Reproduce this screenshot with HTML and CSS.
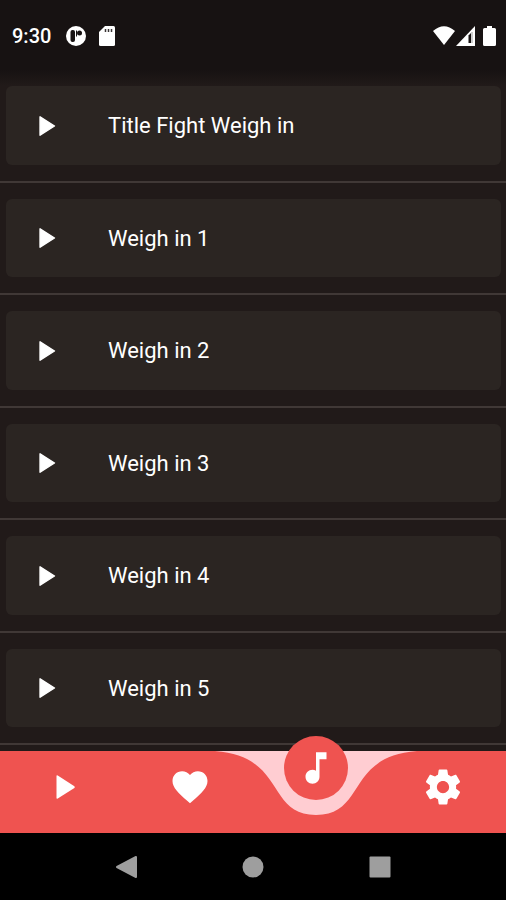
FILE: index.html
```html
<!DOCTYPE html>
<html lang="en">
<head>
<meta charset="utf-8">
<meta name="viewport" content="width=device-width, initial-scale=1">
<title>Weigh in</title>
<link rel="stylesheet" href="styles.css">
</head>
<body>
<svg class="symbols" aria-hidden="true">
  <symbol id="play" viewBox="0 0 24 24"><path d="M8.5 5.5v13l10.2-6.5z" fill="currentColor" stroke="currentColor" stroke-linejoin="round"/></symbol>
</svg>
<div class="screen">
  <header class="status">
    <div class="status-group">
      <time>9:30</time>
      <svg class="status-icon" viewBox="0 0 20 20" aria-hidden="true">
        <circle cx="10" cy="10" r="10" fill="#fff"/>
        <rect x="4.500" y="4" width="4.500" height="12" rx="2" fill="#171212"/>
        <path d="M10.500 4.500v6" stroke="#171212" stroke-width="1"/>
        <circle cx="13.500" cy="7" r="2.500" fill="#171212"/>
      </svg>
      <svg class="status-icon card-icon" viewBox="0 0 16 20" aria-hidden="true">
        <path d="M6 0h8.500Q16 0 16 1.500v17q0 1.500-1.500 1.500h-13Q0 20 0 18.500V6z" fill="#fff"/>
        <path d="M6.500 3v3M9.500 3v3M12.500 3v3" stroke="#3a3535" stroke-width="1.500"/>
      </svg>
    </div>
    <div class="status-group status-right">
      <svg width="22" height="20" viewBox="0 0 22 20" aria-hidden="true"><path d="M0 5Q11-4.500 22 5L11 19z" fill="#fff"/></svg>
      <svg width="19" height="20" viewBox="0 0 19 20" aria-hidden="true"><path d="M19 0v20H0z" fill="#fff"/><path d="M12.500 9.500L15 7v10h-2.500z" fill="#171212"/><path d="M16 6v11" stroke="#999" stroke-width="1"/></svg>
      <svg class="battery" width="13" height="20" viewBox="0 0 13 20" aria-hidden="true"><path d="M4 0h5v2h2.500Q13 2 13 3.500v15q0 1.500-1.500 1.500h-10Q0 20 0 18.500v-15Q0 2 1.500 2H4z" fill="#fff"/></svg>
    </div>
  </header>
  <main>
    <ul class="tracks">
      <li><button class="track" type="button"><svg aria-hidden="true"><use href="#play"/></svg>Title Fight Weigh in</button></li>
      <li><button class="track" type="button"><svg aria-hidden="true"><use href="#play"/></svg>Weigh in 1</button></li>
      <li><button class="track" type="button"><svg aria-hidden="true"><use href="#play"/></svg>Weigh in 2</button></li>
      <li><button class="track" type="button"><svg aria-hidden="true"><use href="#play"/></svg>Weigh in 3</button></li>
      <li><button class="track" type="button"><svg aria-hidden="true"><use href="#play"/></svg>Weigh in 4</button></li>
      <li><button class="track" type="button"><svg aria-hidden="true"><use href="#play"/></svg>Weigh in 5</button></li>
    </ul>
  </main>
  <nav class="tabs" aria-label="Sections">
    <button class="tab" type="button" aria-label="Play"><svg viewBox="0 0 24 24" aria-hidden="true"><path fill="currentColor" d="M8.300 5.700Q8.300 5 9 5.400L18.500 11.500Q19 12 18.500 12.500L9 18.600Q8.300 19 8.300 18.300z"/></svg></button>
    <button class="tab" type="button" aria-label="Favorites"><svg viewBox="0 0 24 24" aria-hidden="true"><path fill="currentColor" d="M12 21.350l-1.450-1.320C5.400 15.360 2 12.280 2 8.500 2 5.420 4.420 3 7.500 3c1.740 0 3.410.81 4.500 2.090C13.090 3.810 14.760 3 16.500 3 19.580 3 22 5.420 22 8.500c0 3.780-3.400 6.860-8.550 11.540z"/></svg></button>
    <button class="tab current" type="button" aria-label="Music" aria-current="page">
      <svg class="notch" viewBox="0 0 202 64" aria-hidden="true"><path fill="#ffcdd2" d="M0 0C71 5 51 64 101 64S131 5 202 0z"/></svg>
      <span class="bubble"><svg viewBox="0 0 24 24" aria-hidden="true"><path fill="currentColor" d="M12 3v10.550c-.59-.34-1.270-.55-2-.55-2.210 0-4 1.790-4 4s1.790 4 4 4 4-1.790 4-4V7h4V3z"/></svg></span>
    </button>
    <button class="tab" type="button" aria-label="Settings"><svg viewBox="0 0 24 24" aria-hidden="true"><path fill="currentColor" d="M19.430 12.980c.04-.32.07-.64.07-.98s-.03-.66-.07-.98l2.110-1.650c.19-.15.24-.42.12-.64l-2-3.460c-.12-.22-.39-.3-.61-.22l-2.490 1c-.52-.4-1.080-.73-1.690-.98l-.38-2.650C14.460 2.180 14.250 2 14 2h-4c-.25 0-.46.18-.49.42l-.38 2.650c-.61.25-1.170.59-1.690.98l-2.490-1c-.23-.09-.49 0-.61.22l-2 3.460c-.13.22-.07.49.12.64l2.110 1.650c-.04.32-.07.65-.07.98s.03.66.07.98l-2.110 1.650c-.19.15-.24.42-.12.64l2 3.460c.12.22.39.3.61.22l2.490-1c.52.4 1.080.73 1.690.98l.38 2.650c.03.24.24.42.49.42h4c.25 0 .46-.18.49-.42l.38-2.650c.61-.25 1.170-.59 1.690-.98l2.490 1c.23.09.49 0 .61-.22l2-3.460c.12-.22.07-.49-.12-.64zM12 15.500c-1.930 0-3.500-1.570-3.500-3.500s1.570-3.500 3.500-3.500 3.500 1.570 3.500 3.500-1.570 3.500-3.500 3.500z"/></svg></button>
  </nav>
  <nav class="system" aria-label="System">
    <button type="button" aria-label="Back"><svg viewBox="0 0 24 24" aria-hidden="true"><path d="M21 2v20L2 12z" fill="currentColor" stroke="currentColor" stroke-width="2" stroke-linejoin="round"/></svg></button>
    <button type="button" aria-label="Home"><svg viewBox="0 0 24 24" aria-hidden="true"><circle cx="12" cy="12" r="10.500" fill="currentColor"/></svg></button>
    <button type="button" aria-label="Recent apps"><svg viewBox="0 0 24 24" aria-hidden="true"><rect x="1.500" y="1.500" width="21" height="21" rx="1" fill="currentColor"/></svg></button>
  </nav>
</div>
</body>
</html>
```
FILE: styles.css
```css
* { box-sizing: border-box; }

body {
  margin: 0;
  background: #211a19;
  color: #fff;
  font-family: Roboto, "Liberation Sans", sans-serif;
}

button {
  margin: 0;
  padding: 0;
  border: 0;
  background: none;
  color: inherit;
  font: inherit;
  cursor: pointer;
}

svg { display: block; flex: none; }

.symbols { position: absolute; width: 0; height: 0; }

.screen {
  display: flex;
  flex-direction: column;
  min-height: 100vh;
}

.status {
  display: flex;
  align-items: center;
  justify-content: space-between;
  height: 70px;
  padding: 1px 10px 0 12px;
  background: #171212;
}

.status-group {
  display: flex;
  align-items: center;
  gap: 15px;
  font-size: 20px;
  font-weight: 500;
}

.status-right { gap: 1px; }
.status-icon { height: 20px; width: 20px; }
.card-icon { width: 16px; margin-left: -2px; }
.battery { margin-left: 7px; }

main {
  display: flex;
  flex: 1;
  padding-bottom: 6px;
  background: linear-gradient(#171212 0, #211a19 16px);
}

.tracks {
  display: grid;
  flex: 1;
  grid-auto-rows: 1fr;
  margin: 0;
  padding: 0;
  list-style: none;
}

.tracks li {
  display: flex;
  padding: 16px 5px 16px 6px;
  border-bottom: 2px solid #403836;
}

.track {
  display: flex;
  flex: 1;
  align-items: center;
  gap: 46px;
  padding: 1px 22px 0;
  border-radius: 6px;
  background: #2b2522;
  font-size: 22px;
  text-align: left;
}

.track svg { width: 34px; height: 34px; }

.tabs {
  display: grid;
  grid-template-columns: repeat(4, 1fr);
  height: 82px;
  background: #ef5350;
}

.tab {
  display: flex;
  align-items: flex-start;
  justify-content: center;
  padding-top: 15px;
}

.tab svg { width: 42px; height: 42px; }

.current { position: relative; }

.tab .notch {
  position: absolute;
  top: 0;
  left: 50%;
  width: 202px;
  height: 64px;
  transform: translateX(-50%);
}

.bubble {
  position: absolute;
  top: -15px;
  display: grid;
  place-items: center;
  width: 64px;
  height: 64px;
  border-radius: 50%;
  background: #ef5350;
}

.system {
  display: grid;
  grid-template-columns: repeat(3, 1fr);
  height: 67px;
  padding: 0 12.5%;
  background: #000;
  color: #9e9e9e;
}

.system button { display: grid; place-items: center; }
.system svg { width: 24px; height: 24px; }
```
